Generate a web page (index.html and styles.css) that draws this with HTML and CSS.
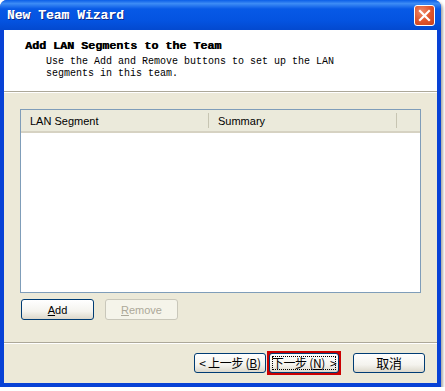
FILE: index.html
```html
<!DOCTYPE html>
<html lang="en">
<head>
    <meta charset="UTF-8">
    <title>New Team Wizard</title>
    <link rel="stylesheet" href="styles.css">
</head>
<body>
    <div class="window">
        <div class="titlebar">
            <span class="title">New Team Wizard</span>
            <div class="close">
                <svg width="13" height="13" viewBox="0 0 13 13">
                    <path d="M2 2 L11 11 M11 2 L2 11" stroke="#fff" stroke-width="2.2" stroke-linecap="square"/>
                </svg>
            </div>
        </div>

        <div class="client">
            <div class="header">
                <h1>Add LAN Segments to the Team</h1>
                <p>Use the Add and Remove buttons to set up the LAN<br>segments in this team.</p>
            </div>

            <div class="body">
                <div class="listview">
                    <div class="list-head">
                        <div class="col col-name">LAN Segment</div>
                        <div class="col col-summary">Summary</div>
                        <div class="col col-rest"></div>
                    </div>
                </div>
                <div class="actions">
                    <button class="btn"><u>A</u>dd</button>
                    <button class="btn" disabled><u>R</u>emove</button>
                </div>
            </div>

            <div class="footer">
                <button class="btn nav">&lt; 上一步 (<u>B</u>)</button>
                <span class="focus-mark"><button class="btn nav focused">下一步 (<u>N</u>)&nbsp; &gt;</button></span>
                <button class="btn nav cancel">取消</button>
            </div>
        </div>
    </div>
</body>
</html>
```

FILE: styles.css
```css
body {
    margin: 0;
    background: #ffffff;
    font-family: "Liberation Sans", Arial, sans-serif;
}
.window {
    width: 441px;
    height: 387px;
    background: #0842d6;
    border-radius: 7px 7px 0 0;
    box-shadow: 2px 2px 3px rgba(0, 0, 0, 0.35);
    display: flex;
    flex-direction: column;
}
.titlebar {
    height: 30px;
    border-radius: 7px 7px 0 0;
    background: linear-gradient(#0a5ee8 0%, #3d8cf5 12%, #0759e6 30%, #0453e0 70%, #0349cf 100%);
    display: flex;
    align-items: center;
    padding: 0 6px 0 7px;
}
.title {
    flex: 1;
    color: #ffffff;
    font-family: "Liberation Mono", monospace;
    font-weight: bold;
    font-size: 13px;
    text-shadow: 1px 1px 0 #0a2a8a, 0.4px 0 0 #ffffff;
}
.close {
    width: 21px;
    height: 21px;
    box-sizing: border-box;
    border: 1px solid #ffffff;
    border-radius: 3px;
    background: radial-gradient(circle at 35% 30%, #f08a6a 0%, #e0562d 50%, #c8401c 100%);
    display: flex;
    align-items: center;
    justify-content: center;
}
.client {
    flex: 1;
    margin: 0 4px 4px;
    background: #ece9d8;
    display: flex;
    flex-direction: column;
}
.header {
    height: 61px;
    background: #ffffff;
    border-bottom: 1px solid #aca899;
    box-shadow: 0 1px 0 #ffffff;
    font-family: "Liberation Mono", monospace;
    color: #000000;
}
.header h1 {
    margin: 10px 0 0 21px;
    font-size: 11.7px;
    line-height: 13px;
    font-weight: bold;
    text-shadow: 0.4px 0 0 #000000;
}
.header p {
    margin: 3px 0 0 42px;
    font-size: 10px;
    line-height: 11.5px;
}
.body {
    padding: 17px 16px 0 16px;
}
.listview {
    height: 182px;
    border: 1px solid #7f9db9;
    background: #ffffff;
}
.list-head {
    display: flex;
    height: 21px;
    background: #ebeadb;
    border-bottom: 2px solid #d6d2c2;
    font-size: 11px;
    color: #000000;
}
.col {
    display: flex;
    align-items: center;
    padding-left: 9px;
    box-sizing: border-box;
    border-right: 1px solid #c7c5b2;
    margin: 3px 0;
}
.col-name {
    width: 188px;
}
.col-summary {
    width: 188px;
}
.col-rest {
    flex: 1;
    border-right: none;
}
.actions {
    display: flex;
    gap: 11px;
    margin-top: 6px;
    padding-left: 1px;
}
.btn {
    width: 73px;
    height: 21px;
    padding: 0;
    border: 1px solid #003c74;
    border-radius: 3px;
    background: linear-gradient(#ffffff 0%, #f4f3ee 60%, #dcd8cb 100%);
    font-family: "Liberation Sans", Arial, sans-serif;
    font-size: 11px;
    color: #000000;
}
.btn:disabled {
    border-color: #c9c7ba;
    background: #f5f4ea;
    color: #aca899;
}
.footer {
    margin-top: auto;
    height: 40px;
    border-top: 1px solid #aca899;
    box-shadow: inset 0 1px 0 #ffffff;
    display: flex;
    align-items: center;
    padding: 0 0 0 190px;
}
.nav {
    width: 72px;
    height: 20px;
    font-family: "Noto Sans CJK SC", sans-serif;
    font-size: 12px;
    line-height: 16px;
    white-space: nowrap;
    letter-spacing: -0.3px;
}
.focus-mark {
    display: flex;
    padding: 2px;
    margin: 0 1px 0 1px;
    background: #cc0000;
}
.focused {
    width: 70px;
    border-color: #003c74;
    outline: 1px dotted #000000;
    outline-offset: -4px;
}
.cancel {
    margin-left: 11px;
    font-size: 13px;
}
```
